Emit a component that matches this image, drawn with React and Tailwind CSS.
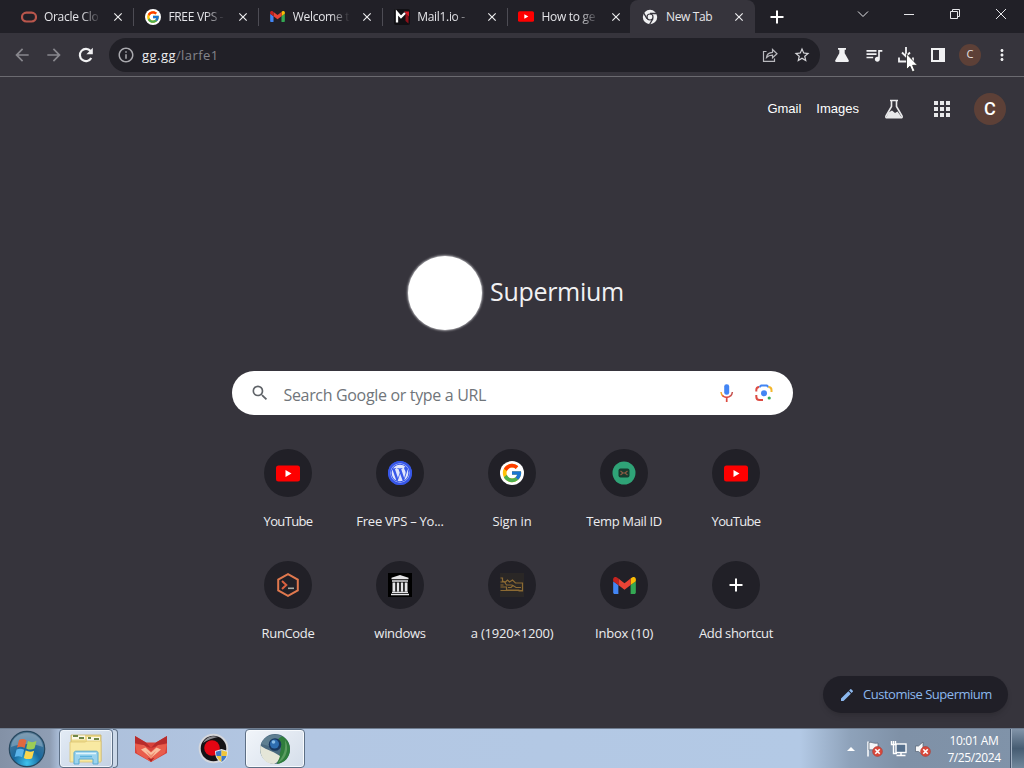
import { FcGoogle } from "react-icons/fc";
import { FaWordpress } from "react-icons/fa";
import {
  MdApps,
  MdArrowBack,
  MdArrowForward,
  MdClose,
  MdEdit,
  MdInfoOutline,
  MdMoreVert,
  MdQueueMusic,
  MdSearch,
  MdStarBorder,
} from "react-icons/md";

function OracleIcon() {
  return (
    <svg className="w-4 h-4" viewBox="0 0 16 16">
      <rect x="1" y="3.7" width="14" height="8.8" rx="4.4" fill="none" stroke="#b9564c" strokeWidth="2.2" />
    </svg>
  );
}

function GoogleIcon({ className, glyph }) {
  return (
    <span className={`flex items-center justify-center rounded-full bg-white ${className}`}>
      <FcGoogle className={glyph} />
    </span>
  );
}

function GmailIcon({ className }) {
  return (
    <svg className={className} viewBox="0 0 24 18">
      <path d="M1.6 18H5.5V8.6L0 4.5V16.4C0 17.3.7 18 1.6 18Z" fill="#4285f4" />
      <path d="M18.5 18h3.9c.9 0 1.6-.7 1.6-1.6V4.5l-5.5 4.1Z" fill="#34a853" />
      <path d="M18.5 1.7v6.9L24 4.5V2.4C24 .4 21.7-.8 20 .5Z" fill="#fbbc04" />
      <path d="M5.5 8.6V1.7L12 6.6l6.5-4.9v6.9L12 13.5Z" fill="#ea4335" />
      <path d="M0 2.4v2.1l5.5 4.1V1.7L4 .5C2.3-.8 0 .4 0 2.4Z" fill="#c5221f" />
    </svg>
  );
}

function MailIoIcon() {
  return (
    <svg className="w-4 h-4" viewBox="0 0 16 16">
      <rect width="16" height="16" rx="2" fill="#111014" />
      <path d="M11.5 5l3-2v11.500l-3-2.500z" fill="#8d1019" />
      <path d="M10 2.500h5v5z" fill="#d31a26" />
      <path d="M3 13.500V3.500L7 8l4-4" fill="none" stroke="#fff" strokeWidth="2.300" />
    </svg>
  );
}

function YoutubeIcon({ className }) {
  return (
    <svg className={className} viewBox="0 0 24 16">
      <rect width="24" height="16" rx="2.500" fill="#fe0000" />
      <path d="M9.500 4.500v7l6-3.500z" fill="#fff" />
    </svg>
  );
}

function ChromeIcon() {
  return (
    <svg className="w-4 h-4" viewBox="0 0 16 16">
      <circle cx="8" cy="8" r="7.200" fill="#f1f1f3" />
      <circle cx="8" cy="8" r="3.600" fill="#36343c" />
      <circle cx="8" cy="8" r="2.400" fill="#f1f1f3" />
      <path d="M8 4.500h7M5 9.800L1.600 3.900M11 9.700L7.500 15.500" stroke="#36343c" strokeWidth="1.300" />
    </svg>
  );
}

function TempMailIcon() {
  return (
    <svg className="w-6 h-6" viewBox="0 0 24 24">
      <circle cx="12" cy="12" r="11.500" fill="#2fa377" />
      <rect x="6.500" y="7.500" width="11" height="9" rx="2" fill="#173a2e" />
      <path d="M8.500 10l2.500 2-2.500 2M15.500 10L13 12l2.500 2M11 12h2" fill="none" stroke="#8a5a44" strokeWidth="1.200" />
    </svg>
  );
}

function RunCodeIcon() {
  return (
    <svg className="w-6 h-6" viewBox="0 0 24 24" fill="none">
      <path d="M12 1.200l9.800 5.400v10.800L12 22.800 2.200 17.400V6.600z" stroke="#e0784e" strokeWidth="2" />
      <path d="M6 8l4.300 4L6 16" stroke="#d9603f" strokeWidth="2" />
      <path d="M12 15.300h6" stroke="#a7aaa4" strokeWidth="1.600" />
    </svg>
  );
}

function ArchiveIcon() {
  return (
    <svg className="w-6 h-6" viewBox="0 0 24 24">
      <rect width="24" height="24" fill="#000" />
      <path
        d="M12 2l8.500 2.700v1.500h-17V4.700zM4 7.200h16v1.600H4zM4.500 9.500h2.800v9H4.500zM8.800 9.500h2.400v9H8.800zM12.800 9.500h2.400v9h-2.400zM16.700 9.500h2.800v9h-2.800zM4 18.800h16v1.300H4zM3 20.700h18v1.500H3z"
        fill="#e4e4e6"
      />
    </svg>
  );
}

function WallpaperIcon() {
  return (
    <svg className="w-6 h-6" viewBox="0 0 24 24" fill="none">
      <rect width="24" height="24" fill="#2a2726" />
      <path
        d="M.5 5h2v3l3 1 2-2 2 2 3-2 3 3h7v8h-4M.5 9h4l2 3h6M.5 14h6v3h13M.5 12h3M8 14.500h3l2-2 3 2h5M.5 17.500h22"
        stroke="#8c6a33"
        strokeWidth="1.200"
      />
    </svg>
  );
}

function PlusIcon({ className }) {
  return (
    <svg className={className} viewBox="0 0 18 18">
      <path d="M9 2.500v13M2.500 9h13" stroke="#fff" strokeWidth="2" />
    </svg>
  );
}

function ReloadIcon() {
  return (
    <svg className="w-5 h-5" viewBox="0 0 20 20" fill="none">
      <path d="M15.300 13A6.100 6.100 0 1 1 14.600 6" stroke="#f1f1f3" strokeWidth="2.200" />
      <path d="M16.800 2.800v6.400h-6.400z" fill="#f1f1f3" />
    </svg>
  );
}

function FlaskIcon() {
  return (
    <svg className="w-4 h-4" viewBox="0 0 16 16" fill="#f1f1f3">
      <path d="M4 1h8v1.700h-1.300v3.600l4 7c.5 1-.1 1.700-1 1.700H2.300c-.9 0-1.500-.7-1-1.700l4-7V2.700H4z" />
    </svg>
  );
}

function LabsIcon() {
  return (
    <svg className="w-5 h-5" viewBox="0 0 20 20">
      <path d="M6 1.500h8M7.500 1.500v6L2 17c-.5 1 0 1.800 1 1.800h14c1 0 1.500-.8 1-1.800l-5.500-9.500v-6" fill="none" stroke="#e8e8ea" strokeWidth="1.600" />
      <path d="M4.500 13.500l3.500-2 3 2.500 2.500-1.500 4 5.500H2.500z" fill="#e8e8ea" />
    </svg>
  );
}

function ShareIcon() {
  return (
    <svg className="w-4 h-4" viewBox="0 0 16 16" fill="none" stroke="#b9b9be" strokeWidth="1.200">
      <path d="M4.500 4.500H1.500v9.800h11V11.500" />
      <path d="M4.500 10.500c.4-3.500 2.500-5 6-5.200V2.500l4.500 4.200-4.500 4.100V8.200c-3 0-4.500.6-6 2.300z" />
    </svg>
  );
}

function DownloadIcon() {
  return (
    <svg className="w-4 h-4" viewBox="0 0 16 16" fill="none" stroke="#f1f1f3" strokeWidth="1.800">
      <path d="M8 0v9M4 5.500l4 4 4-4M1 10.500v4h14v-4" />
    </svg>
  );
}

function MicIcon() {
  return (
    <svg className="w-5 h-5" viewBox="0 0 20 20" fill="none">
      <rect x="7.200" y="1.200" width="5" height="10.500" rx="2.300" fill="#4285f4" />
      <path d="M4 9c.2 2 .9 3.200 2 4.100" stroke="#f6a623" strokeWidth="1.500" />
      <path d="M5.400 12.500c2.300 2.500 6.200 2.500 8.500 0M9.700 14.500V19" stroke="#dd4a3f" strokeWidth="1.700" />
      <path d="M13.500 13c1.200-1 1.700-2.300 1.900-4" stroke="#c24d4a" strokeWidth="1.500" />
    </svg>
  );
}

function LensIcon() {
  return (
    <svg className="w-5 h-5" viewBox="0 0 20 20" fill="none" strokeWidth="2">
      <path d="M2.300 8.500V7c0-1.700 1-3 3-3" stroke="#dc4b42" />
      <path d="M5.500 4l1.700-1.500h5.600L14.500 4" stroke="#4285f4" />
      <path d="M14.300 4c2 0 3.200 1.200 3.200 3v2" stroke="#f4b72b" />
      <path d="M2.300 12v1.500c0 2 1.200 3.500 3.200 3.500H9" stroke="#dc4b42" />
      <circle cx="10" cy="10.300" r="3" fill="#4285f4" />
      <circle cx="15.200" cy="15" r="1.600" fill="#34a853" />
    </svg>
  );
}

function StartOrb() {
  return (
    <svg className="w-[38px] h-[38px]" viewBox="0 0 38 38">
      <defs>
        <radialGradient id="orb" cx="50%" cy="90%" r="85%">
          <stop offset="0" stopColor="#3fc4ee" />
          <stop offset="0.450" stopColor="#18699f" />
          <stop offset="1" stopColor="#557a96" />
        </radialGradient>
      </defs>
      <circle cx="19" cy="19" r="17.700" fill="url(#orb)" stroke="#27485f" strokeWidth="1.200" />
      <path d="M3 17C4 8 11 3 19 3s15 5 16 14c-10-4-22-4-32 0z" fill="#fff" opacity="0.250" />
      <path d="M11 10c3-1.500 5-1 7.500.3l-2 7.700c-2.500-1.400-5-1.600-7.500-.3z" fill="#e0683f" />
      <path d="M20 11c3 1.500 5 1.500 8.500 0l-2 7.600c-3 1.500-5.500 1.200-8.300-.2z" fill="#9ccc56" />
      <path d="M8.600 19.500c3-1.200 5-1 7.500.3l-2 7.500c-2.500-1.300-4.500-1.500-7.500-.2z" fill="#5cb4ea" />
      <path d="M17.700 20.500c3 1.500 5.500 1.500 8.400.2l-2 7.500c-3 1.300-5.500 1.200-8.300-.3z" fill="#fbd64c" />
    </svg>
  );
}

function ExplorerIcon() {
  return (
    <svg className="w-[36px] h-[32px]" viewBox="0 0 36 32">
      <path d="M3 2h30v26H3z" fill="#eddb8c" stroke="#c5ad62" strokeWidth="0.800" />
      <path d="M4 2.500h13v4H4zM19 4h13v4H19z" fill="#fbf8e6" />
      <path d="M5 3h5M11 5h5M20 5h3M26 6h5" stroke="#6f8646" strokeWidth="1.800" />
      <path d="M2 9h15l2-1h14v21H2z" fill="#f8e9a2" stroke="#dcc471" strokeWidth="0.800" />
      <path d="M6 31V20c0-1 .8-1.800 1.800-1.800h20.400c1 0 1.800.8 1.800 1.800v11h-5v-5H11v5z" fill="#9bd3ee" stroke="#58a9d2" strokeWidth="1" />
      <path d="M8 20.500h20" stroke="#dff4fc" strokeWidth="1.500" />
      <path d="M12 23.500h12" stroke="#5bb3de" strokeWidth="1.500" />
    </svg>
  );
}

function FoxIcon() {
  return (
    <svg className="w-[34px] h-[28px]" viewBox="0 0 34 28">
      <path d="M1 1l11 6.500h10L33 1v17l-16 9L1 18z" fill="#d8423b" />
      <path d="M1 1l11 6.500 5 5.500L1 8z" fill="#b72c2c" />
      <path d="M33 1L22 7.500 17 13l16-5z" fill="#b72c2c" />
      <path d="M1 9l9 1 7 6.500L24 10l9-1-2 9-14 9L3 18z" fill="#e85d4c" />
      <path d="M7 14.500l4.500-2 5.500 5 5.500-5 4.500 2-10 8.500z" fill="#fabf9f" />
      <path d="M12 16l5 4 5-4-5 7.500z" fill="#f08d70" />
      <path d="M13.500 22.500l3.500 1.500 3.500-1.500-3.500 4.500z" fill="#a92828" />
    </svg>
  );
}

function RecorderIcon() {
  return (
    <svg className="w-8 h-8" viewBox="0 0 32 32">
      <circle cx="15.500" cy="15.500" r="13.800" fill="#151315" stroke="#d5d7dc" strokeWidth="2" />
      <path d="M5 10c3-6 9-8 15-6-5 1-11 3-15 6z" fill="#8b8b90" />
      <circle cx="14" cy="15" r="7.800" fill="#e30613" />
      <path d="M17 18l6.500-2 6.500 2c0 6-2 9-6.500 12-4.500-3-6.500-6-6.500-12z" fill="#dfe6ee" />
      <path d="M23.500 17.200v5.800h-5c-.5-1.500-.5-2.800-.5-4.200z" fill="#3f78c4" />
      <path d="M23.500 17.200l5.500 1.600c0 1.500-.1 2.800-.5 4.200h-5z" fill="#f0c63a" />
      <path d="M18.500 23h5v6c-2.600-1.700-4.200-3.500-5-6z" fill="#f0c63a" />
      <path d="M28.500 23h-5v6c2.600-1.700 4.200-3.500 5-6z" fill="#3f78c4" />
    </svg>
  );
}

function SupermiumIcon() {
  return (
    <svg className="w-8 h-8" viewBox="0 0 32 32">
      <circle cx="16" cy="16" r="15" fill="#4b6a80" />
      <path d="M17 2c8 0 14 6 14 14 0 8-5 14-13 15l4-15z" fill="#2f7d3c" />
      <path d="M26 7c3 5 3 12-1 18-2 2.500-4 4-6 4.500 6-7 8-13 7-22.500z" fill="#5b9c60" />
      <path d="M1.300 12c3 4 11 5 19.700 11-1 4-3 7-6 8C5 31 0 22 1.300 12z" fill="#e5e6d8" />
      <path d="M2 11C5 3 14-.5 23 3L10 13z" fill="#5f7f91" />
      <circle cx="16" cy="11.500" r="6.300" fill="#18375f" />
      <circle cx="15.500" cy="11" r="4.500" fill="#2e6db0" />
      <circle cx="14.500" cy="9" r="1.800" fill="#88bce6" />
    </svg>
  );
}

function ErrorBadge({ cx, cy }) {
  return (
    <g>
      <circle cx={cx} cy={cy} r="4.900" fill="#d9493c" stroke="#a93a33" strokeWidth="0.600" />
      <path d={`M${cx - 2.2} ${cy - 2.2}l4.4 4.4m0 -4.4l-4.4 4.4`} stroke="#fff" strokeWidth="1.600" />
    </g>
  );
}

function ActionCenterIcon() {
  return (
    <svg className="w-[18px] h-[18px]" viewBox="0 0 18 18">
      <path d="M2 1.500v15" stroke="#fff" strokeWidth="1.500" />
      <path d="M3 2.500c3-1 4 1.500 9 .5v7c-3 1-6-1-9 0z" fill="#f5f6f8" stroke="#556273" strokeWidth="0.700" />
      <ErrorBadge cx={11.5} cy={11.5} />
    </svg>
  );
}

function NetworkIcon() {
  return (
    <svg className="w-[18px] h-[18px]" viewBox="0 0 18 18" fill="none">
      <rect x="6" y="4" width="10" height="8.500" fill="#56708d" stroke="#fff" strokeWidth="1.400" />
      <path d="M6.500 15.500h9M11 13v2.500" stroke="#fff" strokeWidth="1.500" />
      <path d="M1.500 1v3.500h4V1M3.500 1v12.500H7" stroke="#fff" strokeWidth="1.400" />
    </svg>
  );
}

function VolumeIcon() {
  return (
    <svg className="w-[18px] h-[18px]" viewBox="0 0 18 18">
      <path d="M1.500 6h3L9 2v13L4.500 11.500h-3z" fill="#f5f6f8" stroke="#556273" strokeWidth="0.700" />
      <ErrorBadge cx={11.5} cy={11.5} />
    </svg>
  );
}

const tabs = [
  { title: "Oracle Clo", icon: <OracleIcon /> },
  { title: "FREE VPS -", icon: <GoogleIcon className="w-4 h-4" glyph="w-3.5 h-3.5" /> },
  { title: "Welcome t", icon: <GmailIcon className="w-[15px] h-[11px]" /> },
  { title: "Mail1.io -", icon: <MailIoIcon /> },
  { title: "How to ge", icon: <YoutubeIcon className="w-4 h-[11px]" /> },
];

const shortcuts = [
  { label: "YouTube", icon: <YoutubeIcon className="w-6 h-[17px]" />, tracking: "tracking-[-0.65px]" },
  {
    label: "Free VPS – Yo...",
    icon: (
      <span className="flex rounded-full bg-[#3858e9]">
        <FaWordpress className="w-6 h-6 text-[#dfe5fb] border-2 border-[#3858e9] rounded-full" />
      </span>
    ),
    tracking: "tracking-[-0.25px]",
  },
  { label: "Sign in", icon: <GoogleIcon className="w-6 h-6" glyph="w-[22px] h-[22px]" />, tracking: "tracking-[-0.15px]" },
  { label: "Temp Mail ID", icon: <TempMailIcon />, tracking: "tracking-[-0.35px]" },
  { label: "YouTube", icon: <YoutubeIcon className="w-6 h-[17px]" />, tracking: "tracking-[-0.65px]" },
  { label: "RunCode", icon: <RunCodeIcon />, tracking: "tracking-[-0.35px]" },
  { label: "windows", icon: <ArchiveIcon />, tracking: "tracking-[-0.3px]" },
  { label: "a (1920×1200)", icon: <WallpaperIcon />, tracking: "tracking-[-0.2px]" },
  { label: "Inbox (10)", icon: <GmailIcon className="w-[23px] h-[17px]" />, tracking: "tracking-[-0.2px]" },
  { label: "Add shortcut", icon: <PlusIcon className="w-[18px] h-[18px]" />, tracking: "tracking-[-0.35px]" },
];

function Tab({ tab }) {
  return (
    <div className="relative flex items-center w-[124.4px] h-[33px] pl-[10.6px] pr-[9px]">
      <span className="flex w-4 shrink-0 justify-center">{tab.icon}</span>
      <span className="ml-[7.4px] w-[62px] shrink-0 whitespace-nowrap text-xs font-medium tracking-[-0.3px] text-[#e4e4e8] [mask-image:linear-gradient(to_right,black_60%,transparent_92%)]">
        {tab.title}
      </span>
      <MdClose className="ml-auto w-3.5 h-3.5 shrink-0 text-[#eeeef0]" />
      <span className="absolute right-0 top-2 w-px h-[18px] bg-[#4d4c54]" />
    </div>
  );
}

function TabStrip() {
  return (
    <div className="flex h-[33px] pl-2.5 bg-[#212027]">
      {tabs.map((tab) => (
        <Tab key={tab.title} tab={tab} />
      ))}
      <div className="relative flex items-center w-[125px] h-[33px] -ml-0.5 pl-3 pr-[9px] rounded-t-lg bg-[#36343c]">
        <ChromeIcon />
        <span className="ml-2 text-xs font-medium tracking-[-0.35px] text-[#e6e6e9] whitespace-nowrap">New Tab</span>
        <MdClose className="ml-auto w-3.5 h-3.5 text-[#eeeef0]" />
      </div>
      <PlusIcon className="ml-[13px] mt-2 w-[18px] h-[18px]" />
      <div className="flex ml-auto pr-[17px] gap-[34px] text-[#e6e6e9]">
        <svg className="mt-2 w-3 h-3" viewBox="0 0 12 12" fill="none" stroke="currentColor">
          <path d="M1 3.500l5 5 5-5" />
        </svg>
        <svg className="mt-2 w-3 h-3" viewBox="0 0 12 12" fill="none" stroke="currentColor">
          <path d="M1 6.500h10" />
        </svg>
        <svg className="mt-2 w-3 h-3" viewBox="0 0 12 12" fill="none" stroke="currentColor">
          <path d="M1.500 3.500h7v7h-7zM3.500 3V1.500h7v7H9" />
        </svg>
        <svg className="mt-2 w-3 h-3" viewBox="0 0 12 12" fill="none" stroke="currentColor">
          <path d="M1 1l10 10M11 1L1 11" />
        </svg>
      </div>
    </div>
  );
}

function Toolbar() {
  return (
    <div className="flex items-center h-11 pl-3 pr-3.5 bg-[#36343c] border-b border-[#6b6a70]">
      <MdArrowBack className="w-5 h-5 text-[#88878d]" />
      <MdArrowForward className="ml-3 w-5 h-5 text-[#88878d]" />
      <span className="ml-3">
        <ReloadIcon />
      </span>
      <div className="flex items-center w-[711px] h-[34px] ml-[13px] pl-2 pr-[9px] rounded-full bg-[#212027]">
        <MdInfoOutline className="w-[18px] h-[18px] text-[#a9a9ae]" />
        <span className="ml-[7px] mt-0.5 text-[13px] tracking-[0.45px] text-[#85858b]">
          <span className="text-[#eeeef0]">gg.gg</span>/larfe1
        </span>
        <span className="ml-auto">
          <ShareIcon />
        </span>
        <MdStarBorder className="ml-[15px] w-[18px] h-[18px] text-[#d5d5d9]" />
      </div>
      <div className="flex flex-1 items-center justify-end gap-4">
        <FlaskIcon />
        <MdQueueMusic className="-mx-0.5 w-5 h-5 text-[#f1f1f3]" />
        <DownloadIcon />
        <svg className="w-4 h-4" viewBox="0 0 16 16">
          <path d="M1 1h14v14H1zM3 3v10h6V3z" fill="#f1f1f3" fillRule="evenodd" />
        </svg>
        <span className="flex items-center justify-center w-[22px] h-[22px] -mx-[3px] rounded-full bg-[#5d4037] text-[11px] text-[#e8e2e0]">C</span>
        <MdMoreVert className="w-[18px] h-[18px] -mx-px text-[#f1f1f3]" />
      </div>
    </div>
  );
}

function SearchBox() {
  return (
    <div className="flex items-center w-[561px] h-11 mt-10 pl-[18px] pr-[19px] rounded-full bg-white">
      <MdSearch className="w-5 h-5 text-[#5f6368]" />
      <span className="ml-[14px] mt-[3px] text-base tracking-[-0.33px] text-[#70757a]">Search Google or type a URL</span>
      <span className="ml-auto">
        <MicIcon />
      </span>
      <span className="ml-[17px]">
        <LensIcon />
      </span>
    </div>
  );
}

function NewTabPage() {
  return (
    <main className="flex flex-col items-center h-[651px] bg-[#36343c]">
      <header className="flex items-center self-stretch justify-end h-16 pr-[18px] font-['Liberation_Sans',sans-serif] text-[13px] text-white">
        <span>Gmail</span>
        <span className="ml-[15px] mr-[25px]">Images</span>
        <LabsIcon />
        <MdApps className="ml-[26px] w-6 h-6 text-[#e8e8ea]" />
        <span className="flex items-center justify-center w-8 h-8 ml-5 rounded-full bg-[#5d4037] text-lg font-medium font-['Roboto',sans-serif]">C</span>
      </header>
      <div className="flex items-center w-[210px] h-[76px] mt-[114px]">
        <span className="w-[74px] h-[74px] ml-px shrink-0 rounded-full bg-white shadow-[0_0_2px_1px_#a5a4a9]" />
        <span className="ml-2 mb-[5px] text-[25px] leading-8 tracking-[-0.3px] text-[#f1f1f3] whitespace-nowrap">
          Supermium
        </span>
      </div>
      <SearchBox />
      <div className="grid grid-cols-[repeat(5,112px)] mt-[34px]">
        {shortcuts.map((item, index) => (
          <div key={index} className="flex flex-col items-center h-28">
            <span className="flex items-center justify-center w-12 h-12 rounded-full bg-[#212027]">{item.icon}</span>
            <span className={`mt-3.5 text-[13px] leading-5 text-[#ececef] whitespace-nowrap ${item.tracking}`}>{item.label}</span>
          </div>
        ))}
      </div>
      <div className="flex items-center self-end w-[185px] h-[37px] mt-[3px] mr-4 pl-4 rounded-full bg-[#201f27] shadow-md text-[#8cb8ee]">
        <MdEdit className="w-4 h-4" />
        <span className="ml-2 mt-px text-[13px] tracking-[-0.48px] whitespace-nowrap">Customise Supermium</span>
      </div>
    </main>
  );
}

function Taskbar() {
  return (
    <footer className="flex h-10 border-t border-[#6f7d90] bg-[linear-gradient(to_right,#8391a6_0,#8f9eb4_50px,#acbfda_60px,#b3c7e3_300px,#b3c9e5_800px,#8ea2ba_850px,#7f91a7_900px,#8093a9_1024px)]">
      <div className="flex items-center justify-center w-[54px]">
        <StartOrb />
      </div>
      <div className="flex items-center justify-center w-[54px] ml-[5px] border border-[#5d6f85] rounded-sm bg-[linear-gradient(135deg,#e3ebf5,#c3d1e3)] shadow-[inset_0_0_0_1px_#eef4fb]">
        <ExplorerIcon />
      </div>
      <div className="w-[5px] border-y border-r border-[#5d6f85] rounded-r-sm bg-[#cbd8e8]" />
      <div className="flex items-center justify-center w-[65px]">
        <FoxIcon />
      </div>
      <div className="flex items-center justify-center w-[62px]">
        <RecorderIcon />
      </div>
      <div className="flex items-center justify-center w-[60px] border border-[#5d6f85] rounded-sm bg-[linear-gradient(135deg,#f1f5fa,#d5deea)] shadow-[inset_0_0_0_1px_#f7fafd]">
        <SupermiumIcon />
      </div>
      <div className="flex items-center ml-auto">
        <svg className="w-2 h-1.5 mr-[11px]" viewBox="0 0 8 6">
          <path d="M4 1l4 4H0z" fill="#fff" />
        </svg>
        <div className="flex gap-1.5">
          <ActionCenterIcon />
          <NetworkIcon />
          <VolumeIcon />
        </div>
        <div className="w-[74px] ml-1 pl-0.5 text-center text-xs leading-[17px] tracking-[-0.4px] text-white">
          <div>10:01 AM</div>
          <div>7/25/2024</div>
        </div>
        <div className="w-[14px] h-full border-l border-[#42536a] bg-[linear-gradient(to_bottom,#8294a9,#465c72_50%,#71889c)] shadow-[inset_1px_0_0_#a3b2c4]" />
      </div>
    </footer>
  );
}

export default function App() {
  return (
    <div className="relative w-[1024px] h-[768px] overflow-hidden font-['Open_Sans','Noto_Sans',sans-serif]">
      <TabStrip />
      <Toolbar />
      <NewTabPage />
      <Taskbar />
      <svg className="absolute left-[906px] top-[53px] w-3 h-5" viewBox="0 0 12 20">
        <path d="M.5.800v15.700l3.500-3.300 2.300 5.600 2.600-1-2.300-5.500h5z" fill="#fff" stroke="#222" strokeWidth="0.800" />
      </svg>
    </div>
  );
}
